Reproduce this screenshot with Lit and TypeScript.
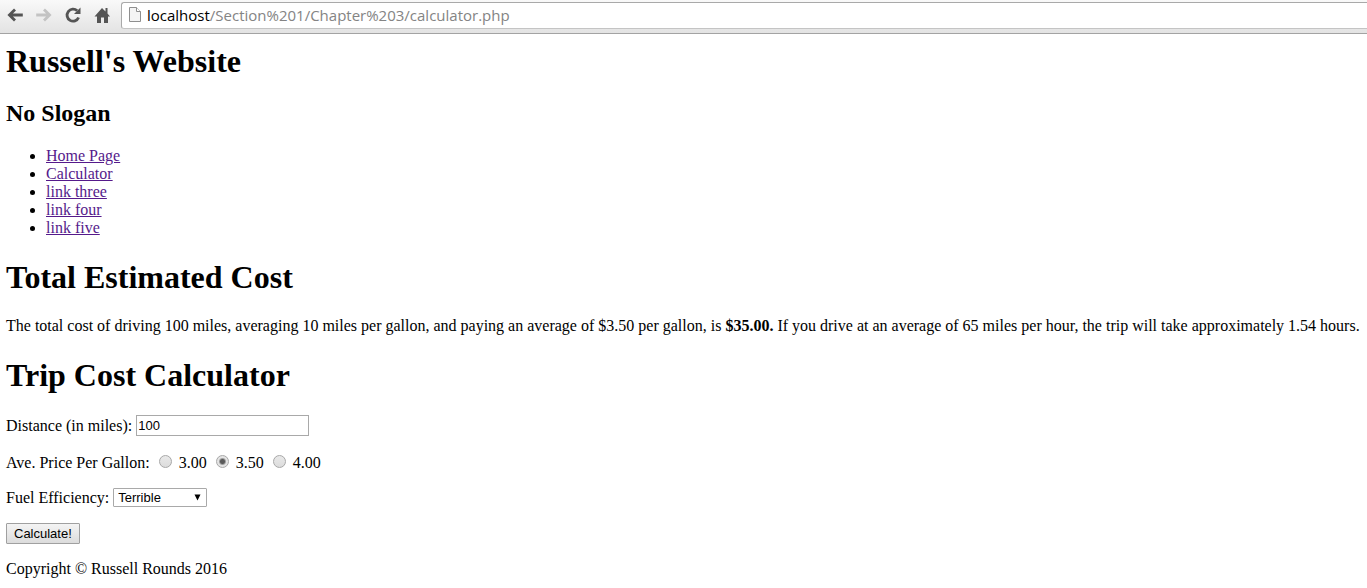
import { LitElement, html, css } from "lit";
import { customElement, state } from "lit/decorators.js";

@customElement("browser-bar")
class BrowserBar extends LitElement {
  static styles = css`
    :host {
      display: block;
    }
    .bar {
      display: flex;
      align-items: center;
      box-sizing: border-box;
      height: 34px;
      padding: 0 0 3px 6px;
      border-bottom: 1px solid #a3a3a3;
      background: linear-gradient(#f9f9f9, #e3e3e3);
    }
    .nav {
      display: flex;
      gap: 11px;
      margin-right: 10px;
    }
    .nav button {
      display: block;
      width: 18px;
      height: 18px;
      padding: 0;
      border: 0;
      background: none;
    }
    svg {
      display: block;
    }
    .address {
      display: flex;
      flex: 1;
      align-items: center;
      box-sizing: border-box;
      height: 27px;
      gap: 5px;
      padding-left: 6px;
      border: 1px solid #a9a9a9;
      border-bottom-color: #c4c4c4;
      border-right: 0;
      border-radius: 3px 0 0 3px;
      background: #fff;
      font: 15px/24px "Open Sans", "Noto Sans", sans-serif;
      color: #848484;
      white-space: nowrap;
    }
    .host {
      color: #000;
    }
  `;

  render() {
    return html`
      <header class="bar">
        <nav class="nav" aria-label="Browser">
          <button type="button" aria-label="Back">
            <svg width="18" height="18" viewBox="0 0 18 18" fill="none" stroke="#555" stroke-width="2.8">
              <path d="M3.5 9H16.8M9 3.4L3.4 9L9 14.6" />
            </svg>
          </button>
          <button type="button" aria-label="Forward">
            <svg width="18" height="18" viewBox="0 0 18 18" fill="none" stroke="#c3c3c3" stroke-width="2.8">
              <path d="M1.2 9H14.5M9 3.4L14.6 9L9 14.6" />
            </svg>
          </button>
          <button type="button" aria-label="Reload">
            <svg width="18" height="18" viewBox="0 0 18 18">
              <path d="M14.6 11.5A6 6 0 1 1 13.2 4.8" fill="none" stroke="#555" stroke-width="2.8" />
              <path d="M16.5 1.5V8H10Z" fill="#555" />
            </svg>
          </button>
          <button type="button" aria-label="Home">
            <svg width="18" height="18" viewBox="0 0 18 18" fill="#555">
              <path d="M9 2L12.5 5.5V2H14.5V7.5L17 10.5H15V17H11V11.5H8V17H4V10.5H1.5Z" />
            </svg>
          </button>
        </nav>
        <div class="address">
          <svg width="14" height="18" viewBox="0 0 14 18">
            <path d="M1.5 1.5H8.5L12.5 5.5V15.5H1.5Z" fill="#f4f4f4" stroke="#8f8f8f" />
            <path d="M8.5 1.5V5.5H12.5" fill="#fff" stroke="#8f8f8f" />
          </svg>
          <span><span class="host">localhost</span>/Section%201/Chapter%203/calculator.php</span>
        </div>
      </header>
    `;
  }
}

@customElement("app-root")
class AppRoot extends LitElement {
  static styles = css`
    :host {
      display: block;
      background: #fff;
      color: #000;
      font: 16px/18px "Liberation Serif", "Times New Roman", serif;
    }
    .page {
      padding: 8px 0 10px 6px;
    }
    h1 {
      margin: 21px 0;
      font-size: 32px;
      line-height: 38px;
    }
    .title {
      margin: 0 0 20px;
    }
    h2 {
      margin: 20px 0;
      font-size: 24px;
      line-height: 27px;
    }
    ul {
      margin: 0;
      padding-left: 40px;
    }
    a {
      color: #551a8b;
    }
    p {
      margin: 0;
    }
    form {
      display: flex;
      flex-direction: column;
      align-items: flex-start;
      gap: 16px;
      margin-bottom: 16px;
    }
    .row {
      display: flex;
      align-items: center;
      gap: 4px;
    }
    input,
    select,
    button {
      box-sizing: border-box;
      margin: 0;
      color: #000;
      font: 13px/15px "Liberation Sans", Arial, sans-serif;
    }
    .distance {
      width: 173px;
      height: 21px;
      padding: 1px;
      border: 1px solid #a9a9a9;
      border-radius: 0;
      background: #fff;
    }
    .prices {
      gap: 9px;
      height: 20px;
      align-items: flex-end;
    }
    .choice {
      display: flex;
      align-items: center;
      gap: 7px;
    }
    .radio {
      appearance: none;
      width: 13px;
      height: 13px;
      margin-bottom: 3px;
      border: 1px solid #a8a8a8;
      border-radius: 50%;
      background: linear-gradient(#e9e9e9, #dcdcdc);
    }
    .radio:checked {
      background: radial-gradient(circle, #5a5a5a 0 2px, #e4e4e4 4px);
    }
    .select {
      display: grid;
      align-items: center;
    }
    .select > * {
      grid-area: 1 / 1;
    }
    select {
      appearance: none;
      width: 94px;
      height: 19px;
      padding: 0 20px 0 4px;
      border: 1px solid #a9a9a9;
      border-radius: 1px;
      background: #fff;
    }
    .arrow {
      justify-self: end;
      margin-right: 6px;
      pointer-events: none;
    }
    .submit {
      height: 21px;
      padding: 1px 7px;
      border: 1px solid #a0a0a0;
      border-radius: 1px;
      background: linear-gradient(#f4f4f4, #dcdcdc);
    }
  `;

  @state() private price = "3.50";

  private links = ["Home Page", "Calculator", "link three", "link four", "link five"];
  private prices = ["3.00", "3.50", "4.00"];

  render() {
    return html`
      <browser-bar></browser-bar>
      <main class="page">
        <h1 class="title">Russell's Website</h1>
        <h2>No Slogan</h2>
        <ul>
          ${this.links.map((text) => html`<li><a href="#">${text}</a></li>`)}
        </ul>
        <h1>Total Estimated Cost</h1>
        <p>
          The total cost of driving 100 miles, averaging 10 miles per gallon, and paying an average of $3.50 per
          gallon, is <b>$35.00.</b> If you drive at an average of 65 miles per hour, the trip will take approximately
          1.54 hours.
        </p>
        <h1>Trip Cost Calculator</h1>
        <form @submit=${(e: Event) => e.preventDefault()}>
          <div class="row">
            <label for="distance">Distance (in miles):</label>
            <input id="distance" class="distance" type="text" value="100" />
          </div>
          <div class="row prices" role="radiogroup" aria-labelledby="price-label">
            <span id="price-label">Ave. Price Per Gallon:</span>
            ${this.prices.map(
              (value) => html`
                <label class="choice">
                  <input
                    class="radio"
                    type="radio"
                    name="price"
                    .checked=${this.price === value}
                    @change=${() => (this.price = value)}
                  />${value}
                </label>
              `
            )}
          </div>
          <div class="row">
            <label for="efficiency">Fuel Efficiency:</label>
            <span class="select">
              <select id="efficiency">
                <option>Terrible</option>
              </select>
              <svg class="arrow" width="7" height="8" viewBox="0 0 7 8"><path d="M0.5 0.5H6.5L3.5 6.5Z" /></svg>
            </span>
          </div>
          <button class="submit" type="submit">Calculate!</button>
        </form>
        <footer>Copyright © Russell Rounds 2016</footer>
      </main>
    `;
  }
}
